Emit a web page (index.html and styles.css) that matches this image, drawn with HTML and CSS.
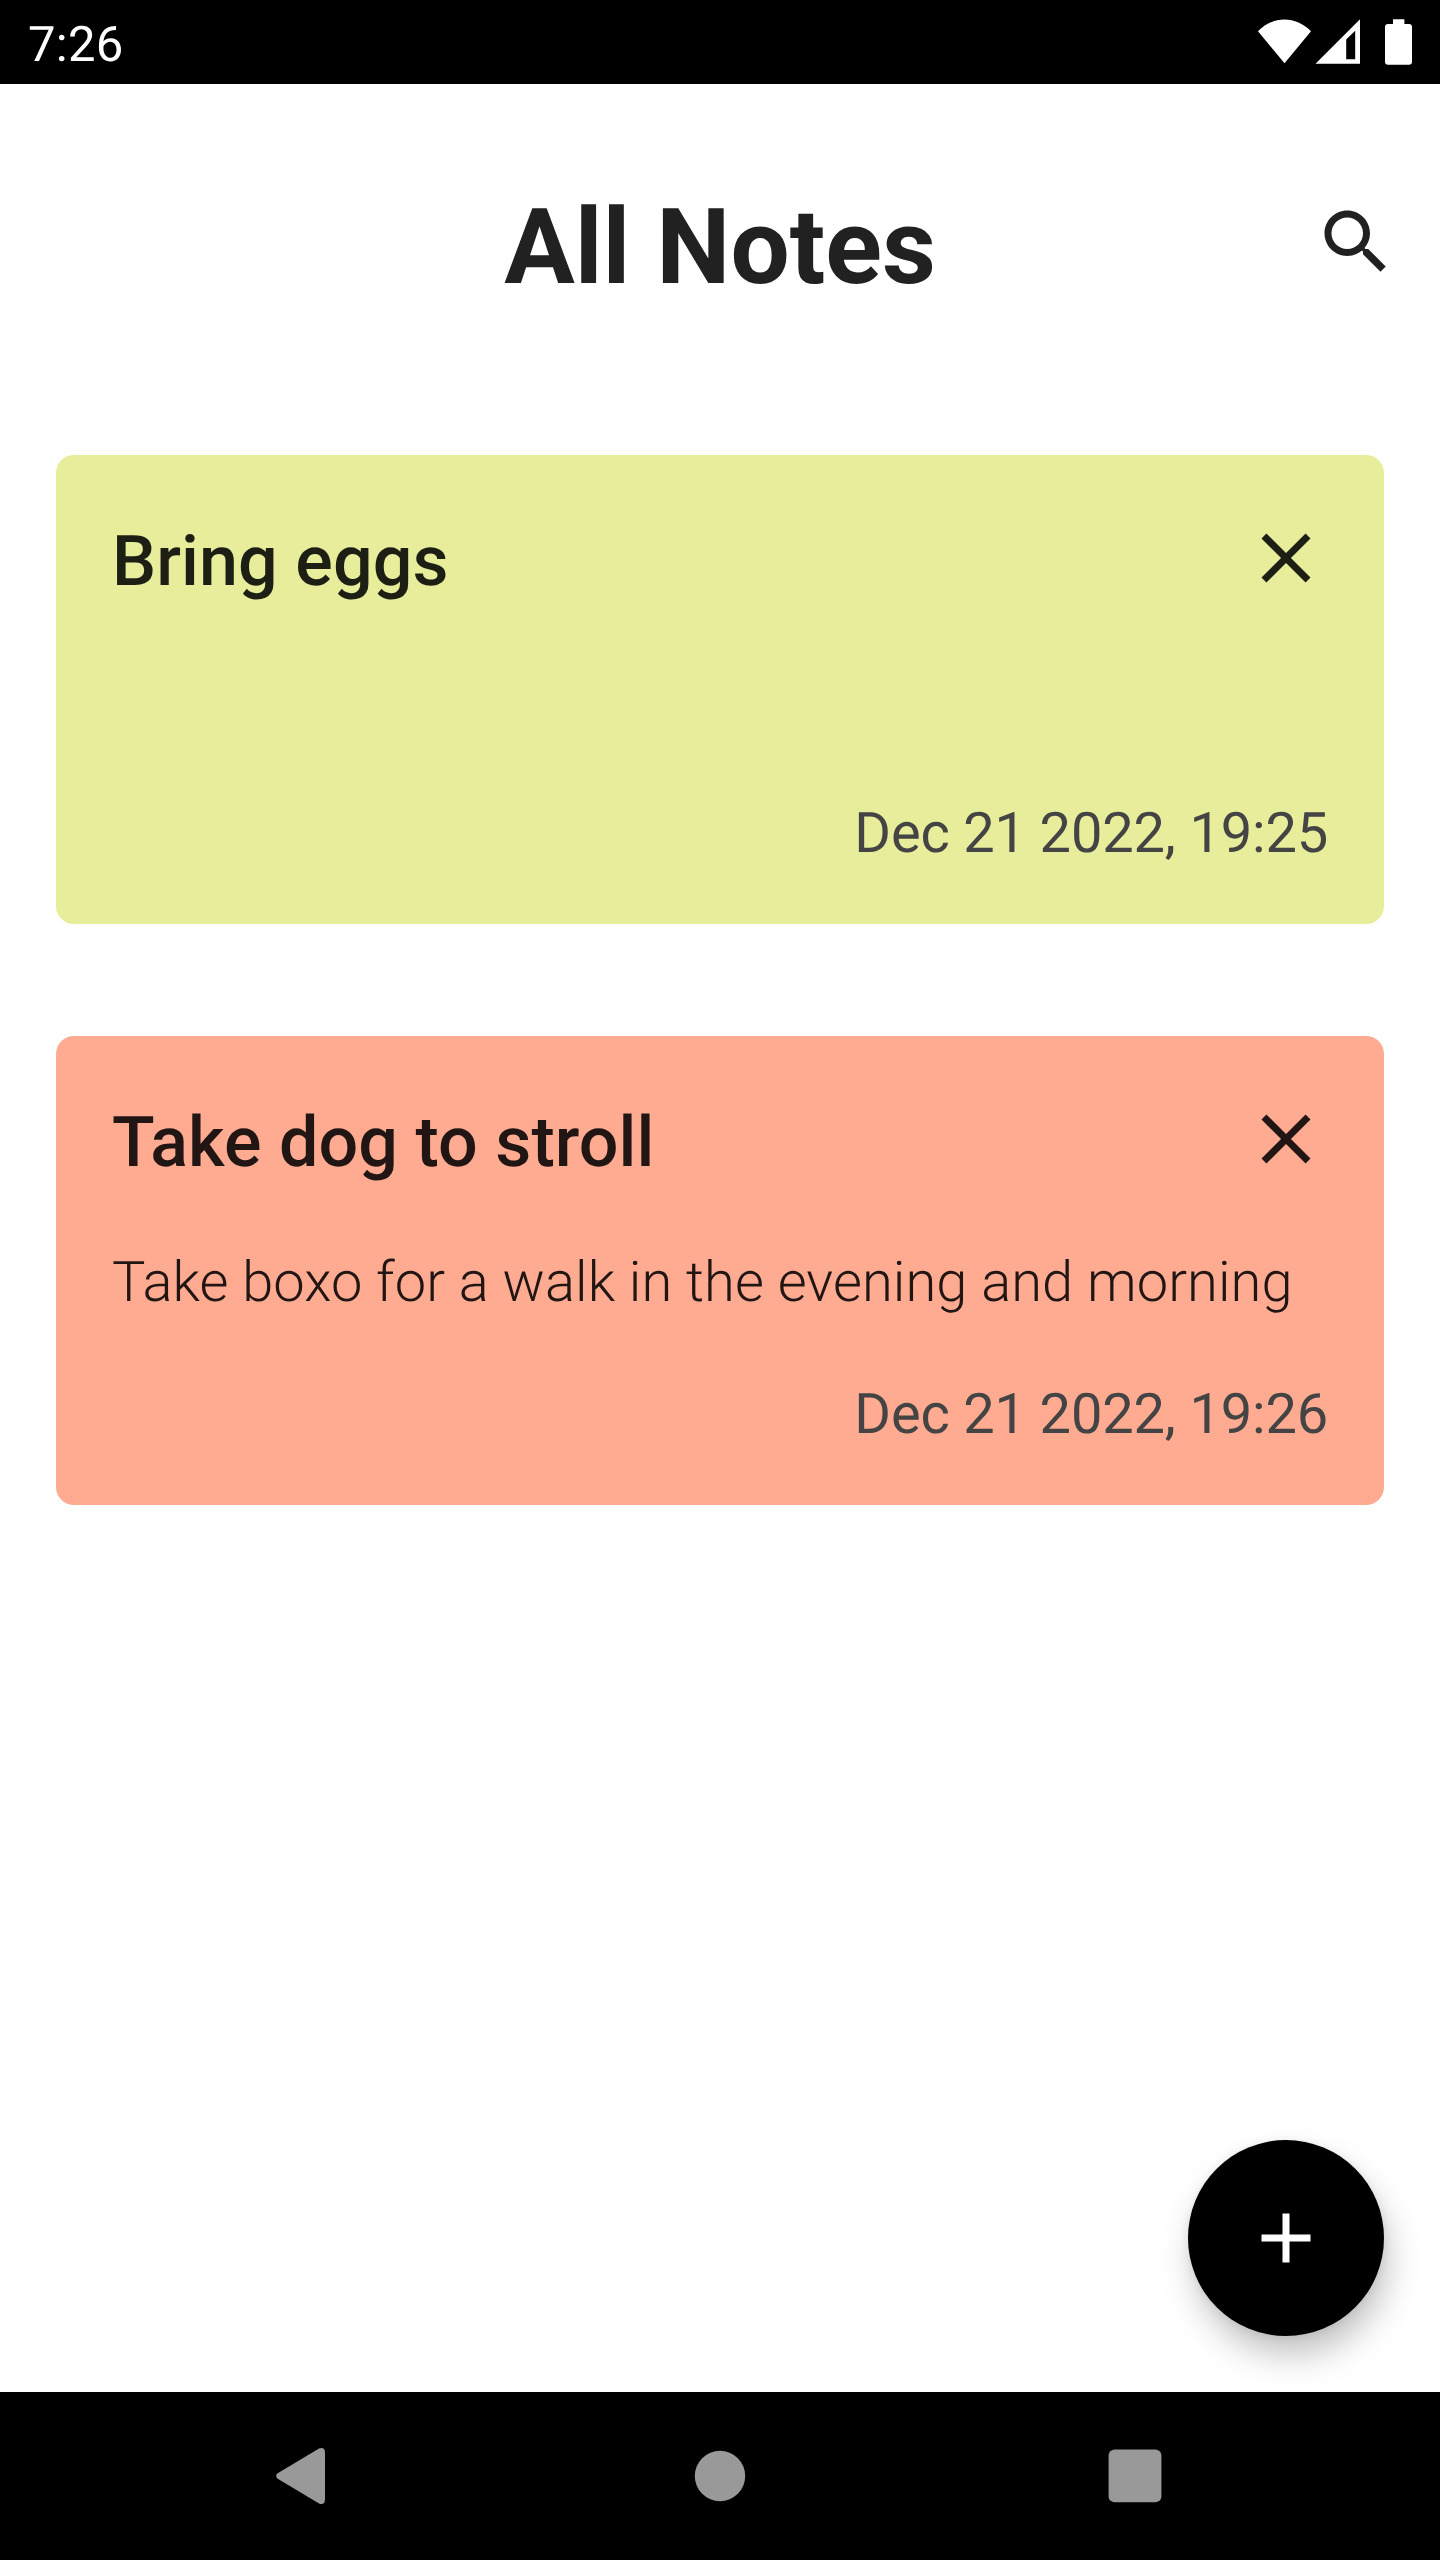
FILE: index.html
```html
<!DOCTYPE html>
<html lang="en">
<head>
<meta charset="utf-8">
<title>All Notes</title>
<link rel="stylesheet" href="styles.css">
</head>
<body>
<div class="status-bar">
  <span class="clock">7:26</span>
  <svg class="status-icons" viewBox="0 0 160 84" aria-hidden="true">
    <path d="M6 31.3C21 15.500 44 15.500 59 31.3L32.5 63.3z"/>
    <path fill-rule="evenodd" d="M108 19.3V63.7H63.5zM94.2 39.5V59.2H103.2V30.8z"/>
    <path d="M141 19.3h11.4v4.8h4.6q3 0 3 3v34.6q0 3-3 3h-21q-3 0-3-3V27.100q0-3 3-3h5z"/>
  </svg>
</div>
<main class="screen">
  <header class="app-header">
    <h1 class="app-title">All Notes</h1>
    <svg class="icon search" viewBox="0 0 24 24" aria-label="Search"><path d="M15.5 14h-.79l-.28-.27C15.41 12.59 16 11.11 16 9.5 16 5.91 13.09 3 9.5 3S3 5.91 3 9.5 5.91 16 9.5 16c1.610 0 3.090-.59 4.230-1.570l.27.28v.79l5 4.990L20.490 19l-4.990-5zm-6 0C7.010 14 5 11.990 5 9.500S7.010 5 9.500 5 14 7.010 14 9.500 11.990 14 9.500 14z"/></svg>
  </header>
  <section class="notes">
    <article class="note note-lime">
      <div class="note-head">
        <h2 class="note-title">Bring eggs</h2>
        <svg class="icon" viewBox="0 0 24 24" aria-label="Delete"><path d="M19 6.410L17.590 5 12 10.590 6.410 5 5 6.410 10.590 12 5 17.590 6.410 19 12 13.410 17.590 19 19 17.590 13.410 12z"/></svg>
      </div>
      <p class="note-text"></p>
      <time class="note-date">Dec 21 2022, 19:25</time>
    </article>
    <article class="note note-coral">
      <div class="note-head">
        <h2 class="note-title">Take dog to stroll</h2>
        <svg class="icon" viewBox="0 0 24 24" aria-label="Delete"><path d="M19 6.410L17.590 5 12 10.590 6.410 5 5 6.410 10.590 12 5 17.590 6.410 19 12 13.410 17.590 19 19 17.590 13.410 12z"/></svg>
      </div>
      <p class="note-text">Take boxo for a walk in the evening and morning</p>
      <time class="note-date">Dec 21 2022, 19:26</time>
    </article>
  </section>
  <button class="fab" aria-label="Add note"><svg class="fab-icon" viewBox="0 0 24 24"><path d="M19 13h-6v6h-2v-6H5v-2h6V5h2v6h6z"/></svg></button>
</main>
<nav class="nav-bar">
  <svg class="nav-icon" viewBox="0 0 84 84"><path d="M18.700 39.300L60 14.600Q65.500 12.500 66 18.200V65.800Q65.500 71.500 60 69.400L18.700 44.700Q15.500 42 18.700 39.300z"/></svg>
  <svg class="nav-icon" viewBox="0 0 84 84"><circle cx="42" cy="42" r="25.200"/></svg>
  <svg class="nav-icon" viewBox="0 0 84 84"><rect x="11.600" y="15.500" width="52.800" height="52.800" rx="6"/></svg>
</nav>
</body>
</html>
```
FILE: styles.css
```css
* { box-sizing: border-box; }

body {
  margin: 0;
  width: 1440px;
  height: 2560px;
  display: flex;
  flex-direction: column;
  background: #fff;
  color: #212121;
  font-family: Roboto, sans-serif;
  text-rendering: geometricPrecision;
}

h1, h2, p { margin: 0; }

.status-bar {
  height: 84px;
  padding: 0 28px;
  display: flex;
  align-items: center;
  justify-content: space-between;
  background: #000;
  color: #fff;
}

.clock {
  font-size: 49px;
  line-height: 84px;
  letter-spacing: 0.3px;
  padding-top: 5px;
}

.status-icons {
  width: 160px;
  height: 84px;
  fill: #fff;
}

.screen {
  position: relative;
  flex: 1;
  padding: 108px 56px 0;
}

.app-header {
  display: grid;
  grid-template-columns: 84px 1fr 84px;
  margin-right: -14px;
  margin-left: -14px;
}

.app-title {
  grid-column: 2;
  font-size: 105px;
  font-weight: 700;
  line-height: 112px;
  text-align: center;
}

.icon {
  display: block;
  flex: none;
  width: 84px;
  height: 84px;
  fill: currentColor;
}

.search { margin-top: 8px; }

.notes {
  display: flex;
  flex-direction: column;
  gap: 112px;
  margin-top: 151px;
}

.note {
  height: 469px;
  padding: 57px 56px 49px;
  border-radius: 18px;
  display: flex;
  flex-direction: column;
}

.note-lime { background: #e7ed9b; color: #1e1f14; }
.note-coral { background: #ffab91; color: #211613; }

.note-head {
  display: flex;
  align-items: center;
  justify-content: space-between;
}

.note-title {
  font-size: 70px;
  font-weight: 500;
  line-height: 84px;
  letter-spacing: 0.08px;
  padding-top: 8px;
}

.note-text {
  height: 84px;
  margin-top: 55px;
  font-size: 56px;
  font-weight: 300;
  line-height: 84px;
  letter-spacing: 0.06px;
  white-space: nowrap;
}

.note-date {
  margin-top: 48px;
  align-self: flex-end;
  font-size: 56px;
  line-height: 84px;
  letter-spacing: -0.17px;
  color: #444;
}

.fab {
  position: absolute;
  right: 56px;
  bottom: 56px;
  width: 196px;
  height: 196px;
  padding: 0;
  border: 0;
  border-radius: 50%;
  display: grid;
  place-items: center;
  background: #000;
  box-shadow: 5px 20px 34px -2px rgba(0, 0, 0, 0.25), 0 1px 10px rgba(0, 0, 0, 0.08);
}

.fab-icon {
  width: 84px;
  height: 84px;
  fill: #fff;
}

.nav-bar {
  height: 168px;
  padding: 0 259px;
  display: flex;
  align-items: center;
  justify-content: space-between;
  background: #000;
}

.nav-icon {
  width: 84px;
  height: 84px;
  fill: #999;
}
```
